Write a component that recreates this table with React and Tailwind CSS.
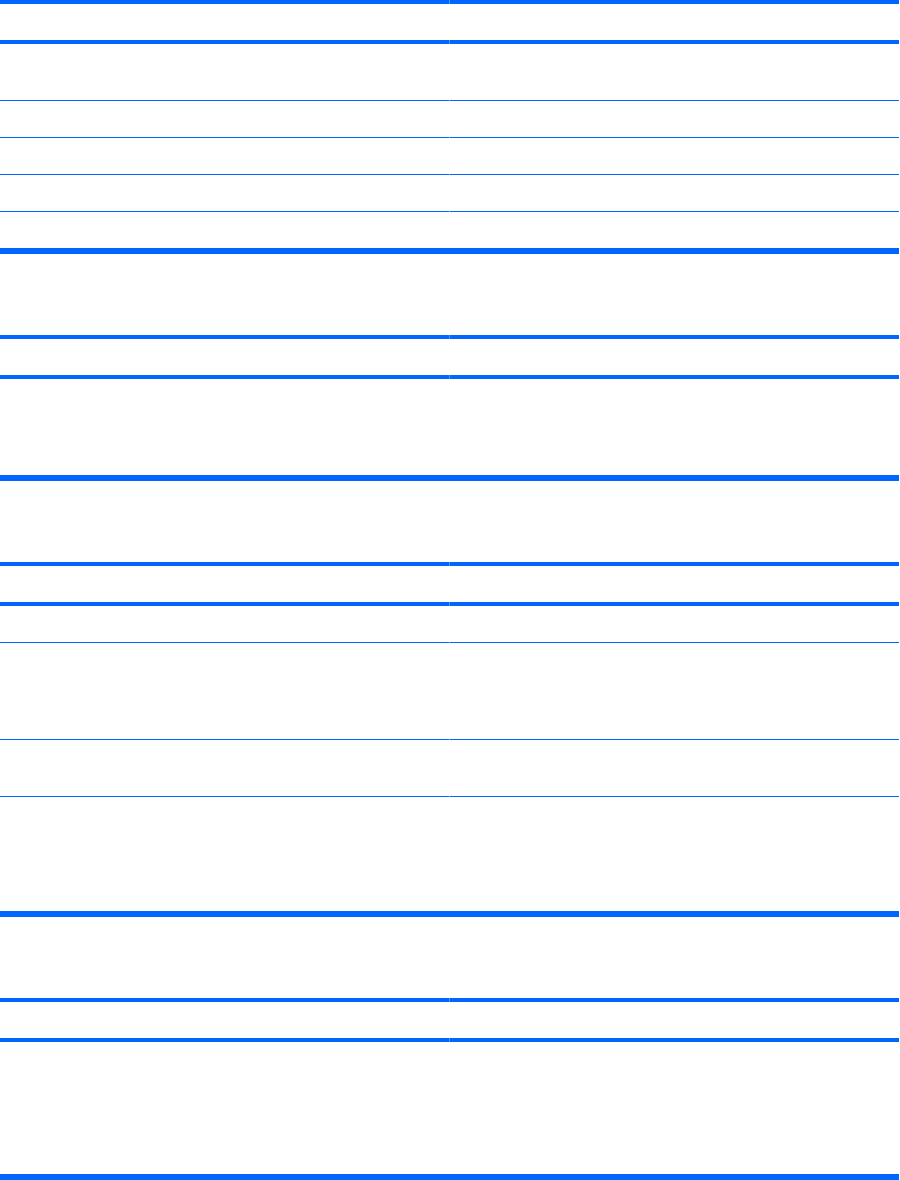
const Rule = ({ h, seam = true, seamColor = "bg-[#4d94ff]" }) => (
  <div className={`flex w-full ${h}`}>
    <div className="w-[449px] bg-[#0066ff]" />
    <div className={`w-px ${seam ? seamColor : "bg-[#0066ff]"}`} />
    <div className="flex-1 bg-[#0066ff]" />
  </div>
);

const Thick = () => <Rule h="h-[6px]" seam={false} />;
const Double = () => <Rule h="h-[4px]" />;
const Thin = () => <Rule h="h-px" seamColor="bg-[#7fb2ff]" />;

const Row = ({ h }) => (
  <div className={`grid grid-cols-[449px_1px_1fr] ${h}`}>
    <div />
    <div />
    <div />
  </div>
);

const sections = [
  { title: "h-[81px]", header: "h-[36px]", rows: ["h-[96px]"] },
  {
    title: "h-[81px]",
    header: "h-[36px]",
    rows: ["h-[36px]", "h-[96px]", "h-[56px]", "h-[114px]"],
  },
  { title: "h-[81px]", header: "h-[36px]", rows: ["h-[132px]"] },
];

export default function App() {
  return (
    <div className="min-h-[1180px] w-[900px] bg-white font-['Liberation_Sans',Arial,sans-serif]">
      <div className="flex w-[899px] flex-col">
        {/* first table */}
        <Double />
        <Row h="h-[36px]" />
        <Double />
        <Row h="h-[56px]" />
        <Thin />
        <Row h="h-[36px]" />
        <Thin />
        <Row h="h-[36px]" />
        <Thin />
        <Row h="h-[36px]" />
        <Thin />
        <Row h="h-[36px]" />
        <Thick />

        {sections.map((s, i) => (
          <div key={i} className="flex flex-col">
            <Row h={s.title} />
            <Double />
            <Row h={s.header} />
            <Double />
            {s.rows.map((r, j) => (
              <div key={j} className="flex flex-col">
                <Row h={r} />
                {j === s.rows.length - 1 ? <Thick /> : <Thin />}
              </div>
            ))}
          </div>
        ))}
      </div>
    </div>
  );
}
